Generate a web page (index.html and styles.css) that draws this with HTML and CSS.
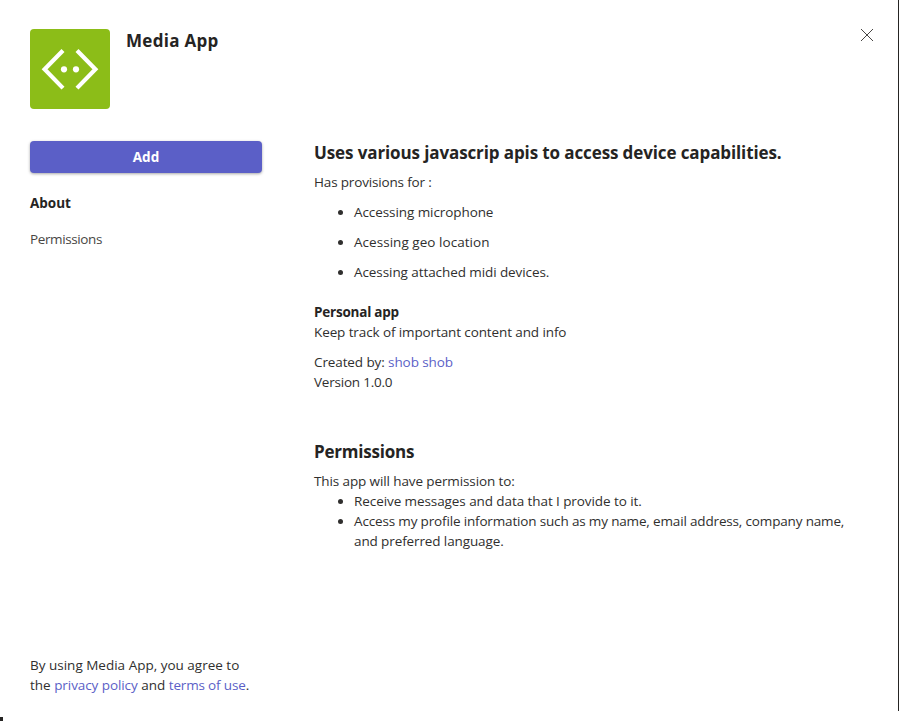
FILE: index.html
```
<!DOCTYPE html>
<html lang="en">
<head>
<meta charset="utf-8">
<title>Media App</title>
<link rel="stylesheet" href="styles.css">
</head>
<body>
<div class="dialog">
  <header class="header">
    <svg class="app-icon" viewBox="0 0 80 80" width="80" height="80" aria-hidden="true">
      <rect width="80" height="80" rx="4" fill="#8cbd18"/>
      <path d="M33 21.5 L14.6 40.3 L33 59.1 M47 21.5 L65.4 40.3 L47 59.1" fill="none" stroke="#fff" stroke-width="4.2"/>
      <circle cx="34" cy="40.3" r="3.1" fill="#fff"/>
      <circle cx="46" cy="40.3" r="3.1" fill="#fff"/>
    </svg>
    <h1 class="title loose">Media App</h1>
    <button class="close" aria-label="Close">
      <svg viewBox="0 0 14 14" width="14" height="14"><path d="M1 1 L13 13 M13 1 L1 13" stroke="#484644" stroke-width="1" fill="none"/></svg>
    </button>
  </header>
  <div class="columns">
    <aside class="side">
      <button class="add">Add</button>
      <nav class="nav">
        <a class="nav-item active">About</a>
        <a class="nav-item">Permissions</a>
      </nav>
      <p class="legal"><span class="even">By using Media App, you agree to</span><br>the <a class="link snug">privacy policy</a><span class="even"> and </span><a class="link tighter">terms of use</a>.</p>
    </aside>
    <main class="main">
      <h2 class="tight">Uses various javascrip apis to access device capabilities.</h2>
      <p class="tighter">Has provisions for :</p>
      <ul class="features">
        <li class="snug">Accessing microphone</li>
        <li class="wide">Acessing geo location</li>
        <li class="snug">Acessing attached midi devices.</li>
      </ul>
      <h3 class="tightest">Personal app</h3>
      <p class="tight">Keep track of important content and info</p>
      <div class="meta">
        <p class="tight">Created by: <a class="link snug">shob shob</a></p>
        <p class="tightest">Version 1.0.0</p>
      </div>
      <h2 class="section tightest">Permissions</h2>
      <p class="tight">This app will have permission to:</p>
      <ul class="grants">
        <li class="snug">Receive messages and data that I provide to it.</li>
        <li><span class="tighter">Access my profile information such as my name, email address, company name,</span><br><span class="tight">and preferred language.</span></li>
      </ul>
    </main>
  </div>
</div>
</body>
</html>
```

FILE: styles.css
```
* { box-sizing: border-box; margin: 0; padding: 0; }
body {
  background: #fff;
  color: #302f2e;
  font: 13.5px/20px "Open Sans", "Noto Sans", sans-serif;
}
.dialog {
  position: relative;
  display: flex;
  flex-direction: column;
  height: 721px;
  padding: 29px 24px 26px 30px;
}
.dialog::before {
  content: "";
  position: absolute;
  top: 0;
  right: 0;
  width: 1px;
  height: 711px;
  background: #252423;
}
.dialog::after {
  content: "";
  position: absolute;
  left: 0;
  bottom: 0;
  width: 3px;
  height: 4px;
  background: #252423;
}
.header { display: flex; align-items: flex-start; height: 112px; }
.app-icon { display: block; flex: none; }
.title { flex: 1; margin-left: 16px; }
h1, h2 { font-size: 17px; line-height: 24px; font-weight: 700; color: #252423; }
h3 { font-size: 13.5px; font-weight: 700; line-height: 20px; color: #252423; }
button { border: 0; background: none; font-family: inherit; }
.close { width: 16px; height: 14px; margin-top: -1px; }
.close svg { display: block; margin: 0 auto; }
.columns { display: flex; flex: 1; gap: 52px; }
.side { display: flex; flex-direction: column; width: 232px; flex: none; }
.add {
  height: 32px;
  border-radius: 4px;
  background: #5b5fc7;
  color: #fff;
  font-size: 13.5px;
  font-weight: 700;
  line-height: 20px;
  box-shadow: 0 1px 3px rgba(0, 0, 0, .35);
}
.nav { display: flex; flex-direction: column; gap: 16px; margin-top: 20px; }
.nav-item { color: #484644; letter-spacing: -.38px; }
.nav-item.active { color: #252423; font-weight: 700; letter-spacing: 0; }
.legal { margin-top: auto; white-space: nowrap; }
.main { flex: 1; min-width: 0; white-space: nowrap; }
.main h2 + p { margin-top: 7px; }
ul { padding-left: 40px; }
.features { display: grid; gap: 10px; margin: 10px 0 20px; }
.meta { margin-top: 10px; }
.section { margin-top: 48px; }
.link { color: #5b5fc7; }
.loose { letter-spacing: .3px; }
.wide { letter-spacing: .04px; }
.even { letter-spacing: 0; }
.snug { letter-spacing: -.08px; }
.tight { letter-spacing: -.11px; }
.tighter { letter-spacing: -.16px; }
.tightest { letter-spacing: -.22px; }
```
